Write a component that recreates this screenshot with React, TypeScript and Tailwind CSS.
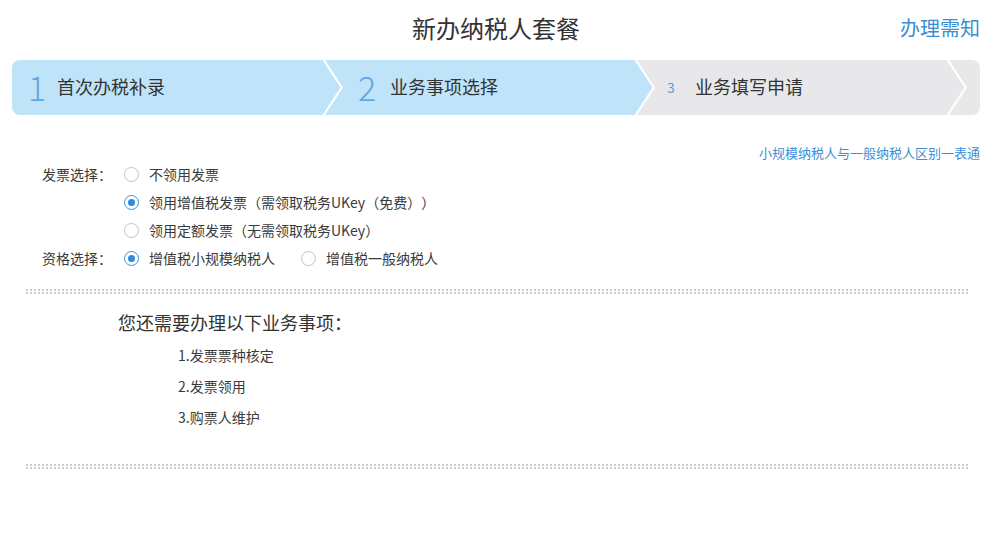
import React from "react";

const outerClip =
  "[clip-path:polygon(0_0,calc(100%_-_18px)_0,100%_50%,calc(100%_-_18px)_100%,0_100%)]";
const innerClip =
  "[clip-path:polygon(0_0,calc(100%_-_20.5px)_0,calc(100%_-_2.5px)_50%,calc(100%_-_20.5px)_100%,0_100%)]";

function Radio({ checked = false }: { checked?: boolean }) {
  return (
    <span
      className={`flex h-[15px] w-[15px] shrink-0 items-center justify-center rounded-full border bg-white ${
        checked ? "border-[#3d93db]" : "border-[#c2c2c2]"
      }`}
    >
      {checked && <span className="h-[7px] w-[7px] rounded-full bg-[#2f8ae0]" />}
    </span>
  );
}

function Option({ label, checked = false }: { label: string; checked?: boolean }) {
  return (
    <label className="flex items-center gap-[10px]">
      <Radio checked={checked} />
      <span>{label}</span>
    </label>
  );
}

function DottedLine({ className = "" }: { className?: string }) {
  return (
    <div className={`ml-[14px] mr-[12px] flex flex-col gap-[1px] ${className}`}>
      <div className="h-[2px] [background-image:repeating-linear-gradient(90deg,#cdcdcd_0_2px,transparent_2px_4px)]" />
      <div className="h-[2px] [background-image:repeating-linear-gradient(90deg,#cdcdcd_0_2px,transparent_2px_4px)]" />
    </div>
  );
}

export default function App() {
  return (
    <div className="h-[539px] w-[990px] bg-white pl-[12px] pr-[10px] font-['Noto_Sans_CJK_SC',sans-serif] text-[#333] [text-spacing-trim:space-all]">
      {/* header */}
      <div className="grid h-[55px] grid-cols-[1fr_auto_1fr] items-center">
        <div />
        <h1 className="text-[24px] leading-none text-[#333]">新办纳税人套餐</h1>
        <a className="justify-self-end text-[20px] leading-none text-[#3a8fd2]">办理需知</a>
      </div>

      {/* steps */}
      <div className="mt-[5px] flex h-[55px] overflow-hidden rounded-[8px] bg-[#e8e8ea]">
        <div className={`relative z-30 w-[331px] shrink-0 bg-white ${outerClip}`}>
          <div className={`flex h-full w-full items-center bg-[#bfe3f9] pb-[2px] pl-[16px] ${innerClip}`}>
            <span className="w-[29px] text-[34px] font-light leading-none text-[#5ea9e4]">1</span>
            <span className="text-[18px]">首次办税补录</span>
          </div>
        </div>
        <div className={`relative z-20 -ml-[18px] w-[330px] shrink-0 bg-white ${outerClip}`}>
          <div className={`flex h-full w-full items-center bg-[#bfe3f9] pb-[2px] pl-[33px] ${innerClip}`}>
            <span className="w-[32px] text-[34px] font-light leading-none text-[#5ea9e4]">2</span>
            <span className="text-[18px]">业务事项选择</span>
          </div>
        </div>
        <div className={`relative z-10 -ml-[18px] w-[330px] shrink-0 bg-white ${outerClip}`}>
          <div className={`flex h-full w-full items-center bg-[#e8e8ea] pb-[2px] pl-[30px] ${innerClip}`}>
            <span className="w-[28px] text-[14px] leading-none text-[#5b9bd8]">3</span>
            <span className="text-[18px]">业务填写申请</span>
          </div>
        </div>
      </div>

      {/* link */}
      <div className="mt-[31px] flex h-[14px] items-center justify-end text-[13px] text-[#3b8fd6]">
        <a>小规模纳税人与一般纳税人区别一表通</a>
      </div>

      {/* form */}
      <div className="pl-[30px] text-[14px] text-[#3a3a3a]">
        <div className="flex h-[28px] items-center">
          <span className="w-[82px]">发票选择：</span>
          <Option label="不领用发票" />
        </div>
        <div className="flex h-[28px] items-center pl-[82px]">
          <Option label="领用增值税发票（需领取税务UKey（免费））" checked />
        </div>
        <div className="flex h-[28px] items-center pl-[82px]">
          <Option label="领用定额发票（无需领取税务UKey）" />
        </div>
        <div className="flex h-[28px] items-center">
          <span className="w-[82px]">资格选择：</span>
          <Option label="增值税小规模纳税人" checked />
          <span className="ml-[26px]">
            <Option label="增值税一般纳税人" />
          </span>
        </div>
      </div>

      <DottedLine className="mt-[17px]" />

      <div className="mt-[16px] pl-[106px]">
        <h2 className="h-[24px] text-[18px] leading-[24px]">您还需要办理以下业务事项：</h2>
        <ul className="mt-[6px] pl-[60px] text-[14px] text-[#3a3a3a]">
          <li className="flex h-[31px] items-center">1.发票票种核定</li>
          <li className="flex h-[31px] items-center">2.发票领用</li>
          <li className="flex h-[31px] items-center">3.购票人维护</li>
        </ul>
      </div>

      <DottedLine className="mt-[31px]" />
    </div>
  );
}
